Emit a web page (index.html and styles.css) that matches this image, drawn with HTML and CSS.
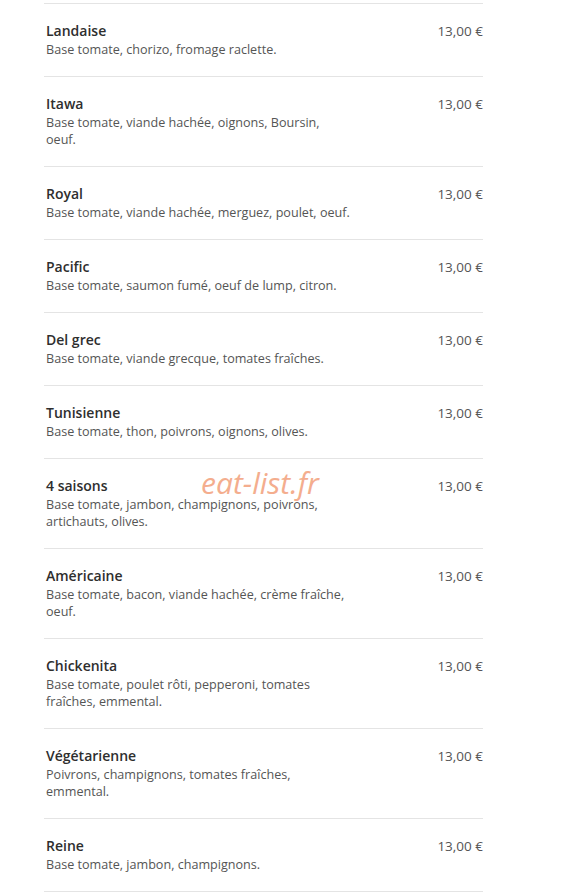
FILE: index.html
```html
<!DOCTYPE html>
<html lang="fr">
<head>
<meta charset="utf-8">
<title>Menu</title>
<link rel="stylesheet" href="styles.css">
</head>
<body>
<div class="menu">
  <div class="item">
    <div class="info"><div class="name">Landaise</div><div class="desc">Base tomate, chorizo, fromage raclette.</div></div>
    <div class="price">13,00 €</div>
  </div>
  <div class="item">
    <div class="info"><div class="name">Itawa</div><div class="desc">Base tomate, viande hachée, oignons, Boursin,<br>oeuf.</div></div>
    <div class="price">13,00 €</div>
  </div>
  <div class="item">
    <div class="info"><div class="name">Royal</div><div class="desc">Base tomate, viande hachée, merguez, poulet, oeuf.</div></div>
    <div class="price">13,00 €</div>
  </div>
  <div class="item">
    <div class="info"><div class="name">Pacific</div><div class="desc">Base tomate, saumon fumé, oeuf de lump, citron.</div></div>
    <div class="price">13,00 €</div>
  </div>
  <div class="item">
    <div class="info"><div class="name">Del grec</div><div class="desc">Base tomate, viande grecque, tomates fraîches.</div></div>
    <div class="price">13,00 €</div>
  </div>
  <div class="item">
    <div class="info"><div class="name">Tunisienne</div><div class="desc">Base tomate, thon, poivrons, oignons, olives.</div></div>
    <div class="price">13,00 €</div>
  </div>
  <div class="item">
    <div class="info"><div class="name">4 saisons</div><div class="desc">Base tomate, jambon, champignons, poivrons, artichauts, olives.</div></div>
    <div class="price">13,00 €</div>
    <div class="watermark">eat-list.fr</div>
  </div>
  <div class="item">
    <div class="info"><div class="name">Américaine</div><div class="desc">Base tomate, bacon, viande hachée, crème fraîche, oeuf.</div></div>
    <div class="price">13,00 €</div>
  </div>
  <div class="item">
    <div class="info"><div class="name">Chickenita</div><div class="desc">Base tomate, poulet rôti, pepperoni, tomates fraîches, emmental.</div></div>
    <div class="price">13,00 €</div>
  </div>
  <div class="item">
    <div class="info"><div class="name">Végétarienne</div><div class="desc">Poivrons, champignons, tomates fraîches, emmental.</div></div>
    <div class="price">13,00 €</div>
  </div>
  <div class="item">
    <div class="info"><div class="name">Reine</div><div class="desc">Base tomate, jambon, champignons.</div></div>
    <div class="price">13,00 €</div>
  </div>
</div>
</body>
</html>
```
FILE: styles.css
```css
html, body {
  margin: 0;
  padding: 0;
  background: #ffffff;
}
body {
  font-family: "Open Sans", "Liberation Sans", sans-serif;
  color: #444;
}
.menu {
  margin-left: 44px;
  width: 439px;
  padding-top: 3px;
}
.item {
  position: relative;
  display: flex;
  justify-content: space-between;
  align-items: flex-start;
  border-top: 1px solid #e4e4e4;
  padding: 17px 0 18px 2px;
}
.item:last-child {
  border-bottom: 1px solid #e4e4e4;
}
.info {
  width: 306px;
}
.name {
  font-size: 14px;
  font-weight: 600;
  line-height: 20px;
  color: #2e2e2e;
}
.desc {
  font-size: 12.6px;
  line-height: 17px;
  color: #555;
}
.price {
  font-size: 13.5px;
  line-height: 20px;
  color: #555;
}
.watermark {
  position: absolute;
  left: 157px;
  top: 7px;
  font-size: 30px;
  line-height: 34px;
  font-style: italic;
  color: #f3a582;
  opacity: 0.9;
  pointer-events: none;
}
```
